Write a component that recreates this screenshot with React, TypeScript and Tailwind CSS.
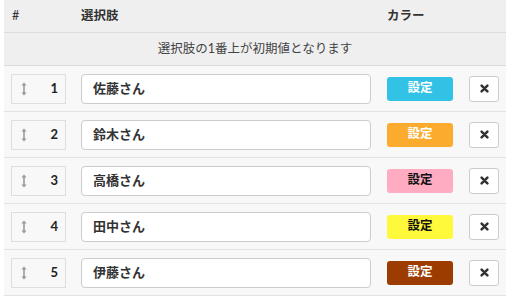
import React from "react";

const rows = [
  { n: 1, name: "佐藤さん", bg: "bg-[#31c2e6]", fg: "text-white" },
  { n: 2, name: "鈴木さん", bg: "bg-[#fbac2f]", fg: "text-white" },
  { n: 3, name: "高橋さん", bg: "bg-[#ffabc2]", fg: "text-[#111]" },
  { n: 4, name: "田中さん", bg: "bg-[#fff93c]", fg: "text-[#111]" },
  { n: 5, name: "伊藤さん", bg: "bg-[#9c3c00]", fg: "text-white" },
];

function ArrowV() {
  return (
    <svg width="6" height="14" viewBox="0 0 6 14" className="block">
      <path d="M3 0.5 L5.6 3.6 L3.8 3.6 L3.8 10.4 L5.6 10.4 L3 13.5 L0.4 10.4 L2.2 10.4 L2.2 3.6 L0.4 3.6 Z" fill="#9a9a9a" />
    </svg>
  );
}

function XIcon() {
  return (
    <svg width="9" height="9" viewBox="0 0 10 10" className="block">
      <path d="M1.8 1.8 L8.2 8.2 M8.2 1.8 L1.8 8.2" stroke="#333" strokeWidth="2.8" strokeLinecap="round" />
    </svg>
  );
}

export default function App() {
  return (
    <div
      className="w-[515px] h-[299px] bg-white overflow-hidden"
      style={{ fontFamily: "Lato, 'Noto Sans CJK JP', sans-serif" }}
    >
      <div className="ml-[4px] w-[502px]">
        <div className="h-[33px] bg-[#efefef] border-b border-[#dcdcdc] flex items-center pl-[7px] text-[12.5px] font-bold text-[#333]">
          <div className="w-[55px] pl-[1px] font-normal">#</div>
          <div className="w-[290px] ml-[15px]">選択肢</div>
          <div className="w-[66px] ml-[16px]">カラー</div>
        </div>
        <div className="h-[33px] bg-[#efefef] border-b border-[#dcdcdc] flex items-center justify-center text-[12.5px] text-[#444]">
          選択肢の1番上が初期値となります
        </div>
        {rows.map((r) => (
          <div
            key={r.n}
            className="h-[46px] bg-[#f8f8f8] border-b border-[#e2e2e2] flex items-center pl-[7px]"
          >
            <div className="w-[55px] h-[30px] border border-[#dedede] bg-[#f8f8f8] flex items-center justify-between pl-[9px] pr-[7px]">
              <ArrowV />
              <span className="text-[13px] font-bold text-[#222]">{r.n}</span>
            </div>
            <div className="w-[290px] h-[30px] ml-[15px] bg-white border border-[#cccccc] rounded-[4px] flex items-center pl-[11px] text-[13px] font-bold text-[#333]">
              {r.name}
            </div>
            <div
              className={`w-[66px] h-[24px] ml-[16px] rounded-[3px] ${r.bg} ${r.fg} flex items-center justify-center text-[12.5px] font-bold`}
            >
              設定
            </div>
            <div className="w-[30px] h-[26px] ml-[16px] bg-white border border-[#cccccc] rounded-[3px] flex items-center justify-center">
              <XIcon />
            </div>
          </div>
        ))}
      </div>
    </div>
  );
}
